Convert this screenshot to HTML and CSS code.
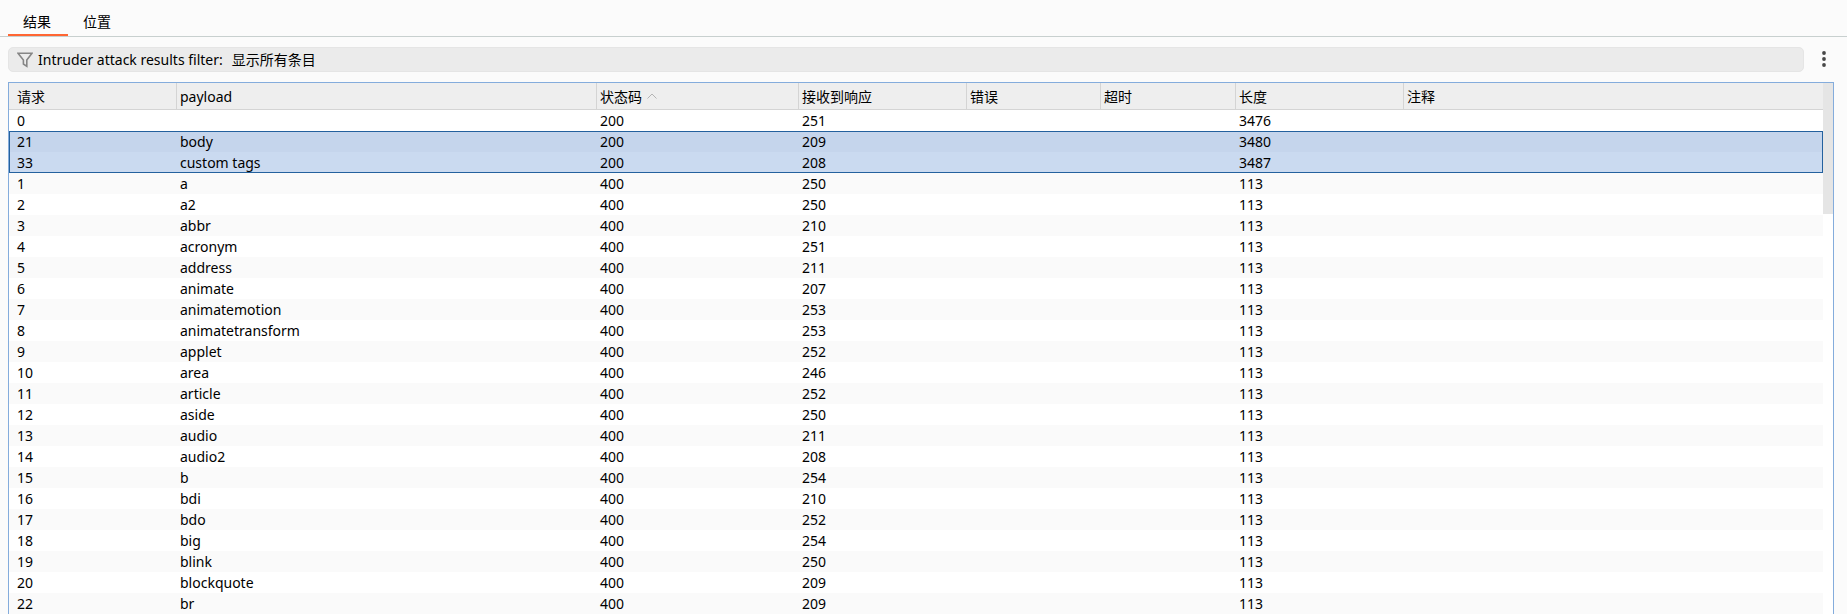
FILE: index.html
```html
<!DOCTYPE html>
<html lang="zh-CN">
<head>
<meta charset="utf-8">
<title>Intruder attack</title>
<link rel="stylesheet" href="styles.css">
</head>
<body>
<nav class="tabs">
  <button class="tab tab-active" type="button">结果</button>
  <button class="tab" type="button">位置</button>
</nav>
<main class="content">
  <div class="toolbar">
    <button class="filter" type="button">
      <svg class="filter-icon" width="16" height="16" viewBox="0 0 16 16" aria-hidden="true"><path d="M1 1.2H15L9.8 8V14.3L6.4 12V8Z" fill="none" stroke="#858585" stroke-width="1.6"/></svg>
      <span class="filter-label">Intruder attack results filter:</span>
      <span>显示所有条目</span>
    </button>
    <button class="more" type="button" aria-label="More">
      <svg width="4" height="16" viewBox="0 0 4 16"><g fill="#484848"><circle cx="2" cy="2" r="1.9"/><circle cx="2" cy="8" r="1.9"/><circle cx="2" cy="14" r="1.9"/></g></svg>
    </button>
  </div>
  <div class="panel">
    <table class="results">
      <colgroup><col class="c-request"><col class="c-payload"><col class="c-status"><col class="c-received"><col class="c-error"><col class="c-timeout"><col class="c-length"><col></colgroup>
      <thead>
        <tr><th>请求</th><th>payload</th><th>状态码<svg class="sort" width="10" height="6" viewBox="0 0 10 6" aria-hidden="true"><path d="M.5 5.5L5 1L9.500 5.500" fill="none" stroke="#b4b4b4"/></svg></th><th>接收到响应</th><th>错误</th><th>超时</th><th>长度</th><th>注释</th></tr>
      </thead>
      <tbody>
        <tr><td>0</td><td></td><td>200</td><td>251</td><td></td><td></td><td>3476</td><td></td></tr>
        <tr class="selected selected-first"><td>21</td><td>body</td><td>200</td><td>209</td><td></td><td></td><td>3480</td><td></td></tr>
        <tr class="selected selected-last"><td>33</td><td>custom tags</td><td>200</td><td>208</td><td></td><td></td><td>3487</td><td></td></tr>
        <tr><td>1</td><td>a</td><td>400</td><td>250</td><td></td><td></td><td>113</td><td></td></tr>
        <tr><td>2</td><td>a2</td><td>400</td><td>250</td><td></td><td></td><td>113</td><td></td></tr>
        <tr><td>3</td><td>abbr</td><td>400</td><td>210</td><td></td><td></td><td>113</td><td></td></tr>
        <tr><td>4</td><td>acronym</td><td>400</td><td>251</td><td></td><td></td><td>113</td><td></td></tr>
        <tr><td>5</td><td>address</td><td>400</td><td>211</td><td></td><td></td><td>113</td><td></td></tr>
        <tr><td>6</td><td>animate</td><td>400</td><td>207</td><td></td><td></td><td>113</td><td></td></tr>
        <tr><td>7</td><td>animatemotion</td><td>400</td><td>253</td><td></td><td></td><td>113</td><td></td></tr>
        <tr><td>8</td><td>animatetransform</td><td>400</td><td>253</td><td></td><td></td><td>113</td><td></td></tr>
        <tr><td>9</td><td>applet</td><td>400</td><td>252</td><td></td><td></td><td>113</td><td></td></tr>
        <tr><td>10</td><td>area</td><td>400</td><td>246</td><td></td><td></td><td>113</td><td></td></tr>
        <tr><td>11</td><td>article</td><td>400</td><td>252</td><td></td><td></td><td>113</td><td></td></tr>
        <tr><td>12</td><td>aside</td><td>400</td><td>250</td><td></td><td></td><td>113</td><td></td></tr>
        <tr><td>13</td><td>audio</td><td>400</td><td>211</td><td></td><td></td><td>113</td><td></td></tr>
        <tr><td>14</td><td>audio2</td><td>400</td><td>208</td><td></td><td></td><td>113</td><td></td></tr>
        <tr><td>15</td><td>b</td><td>400</td><td>254</td><td></td><td></td><td>113</td><td></td></tr>
        <tr><td>16</td><td>bdi</td><td>400</td><td>210</td><td></td><td></td><td>113</td><td></td></tr>
        <tr><td>17</td><td>bdo</td><td>400</td><td>252</td><td></td><td></td><td>113</td><td></td></tr>
        <tr><td>18</td><td>big</td><td>400</td><td>254</td><td></td><td></td><td>113</td><td></td></tr>
        <tr><td>19</td><td>blink</td><td>400</td><td>250</td><td></td><td></td><td>113</td><td></td></tr>
        <tr><td>20</td><td>blockquote</td><td>400</td><td>209</td><td></td><td></td><td>113</td><td></td></tr>
        <tr><td>22</td><td>br</td><td>400</td><td>209</td><td></td><td></td><td>113</td><td></td></tr>
      </tbody>
    </table>
    <div class="scrollbar"><div class="thumb"></div></div>
  </div>
</main>
</body>
</html>
```
FILE: styles.css
```css
* { box-sizing: border-box; }

body {
  margin: 0;
  background: #fbfbfb;
  color: #000;
  font: 14px/20px "Noto Sans", "Noto Sans CJK SC", sans-serif;
}

button {
  border: 0;
  padding: 0;
  background: none;
  color: inherit;
  font: inherit;
}

.tabs {
  display: flex;
  padding: 10px 8px 0;
  border-bottom: 1px solid #c8d0cf;
}

.tab {
  width: 60px;
  height: 26px;
  padding-right: 2px;
  border-bottom: 2px solid transparent;
}

.tab-active { border-bottom-color: #ff6633; }

.content { padding: 10px 13px 0 8px; }

.toolbar {
  display: flex;
  align-items: center;
  gap: 18px;
  margin-bottom: 10px;
}

.filter {
  display: flex;
  flex: 1;
  align-items: center;
  height: 25px;
  padding: 0 8px;
  border: 1px solid #e5e5e5;
  border-radius: 5px;
  background: #ebebeb;
}

.filter-icon { margin-right: 5px; }

.filter-label { margin-right: 9px; }

.more {
  display: flex;
  width: 12px;
  margin-bottom: 1px;
}

.panel {
  display: flex;
  border: 1px solid #84acdc;
  border-bottom: 0;
  background: #fff;
}

.results {
  flex: 1;
  width: 100%;
  table-layout: fixed;
  border-spacing: 0;
}

.c-request { width: 168px; }
.c-payload { width: 420px; }
.c-status { width: 202px; }
.c-received { width: 168px; }
.c-error { width: 134px; }
.c-timeout { width: 135px; }
.c-length { width: 168px; }

th,
td {
  padding: 0 3px;
  text-align: left;
  font-weight: 400;
  white-space: nowrap;
}

th:first-child,
td:first-child { padding-left: 8px; }

th {
  height: 27px;
  padding-top: 2px;
  border-right: 1px solid #d4d4d4;
  border-bottom: 1px solid #d4d4d4;
  background: #eee;
}

th:last-child { border-right: 0; }

td { height: 21px; }

tbody tr:nth-child(even) { background: #fafafa; }

.sort {
  margin-left: 5px;
  vertical-align: 3px;
}

tbody tr.selected { background: #cadaf0; }
tbody tr.selected:nth-child(even) { background: #c5d5ec; }

.selected-first td { box-shadow: inset 0 1px #24619e; }
.selected-first td:first-child { box-shadow: inset 1px 1px #24619e; }
.selected-first td:last-child { box-shadow: inset -1px 1px #24619e; }
.selected-last td { box-shadow: inset 0 -1px #24619e; }
.selected-last td:first-child { box-shadow: inset 1px -1px #24619e; }
.selected-last td:last-child { box-shadow: inset -1px -1px #24619e; }

.scrollbar {
  width: 10px;
  background: #fff;
}

.thumb {
  height: 131px;
  background: #e5e5e5;
}
```
